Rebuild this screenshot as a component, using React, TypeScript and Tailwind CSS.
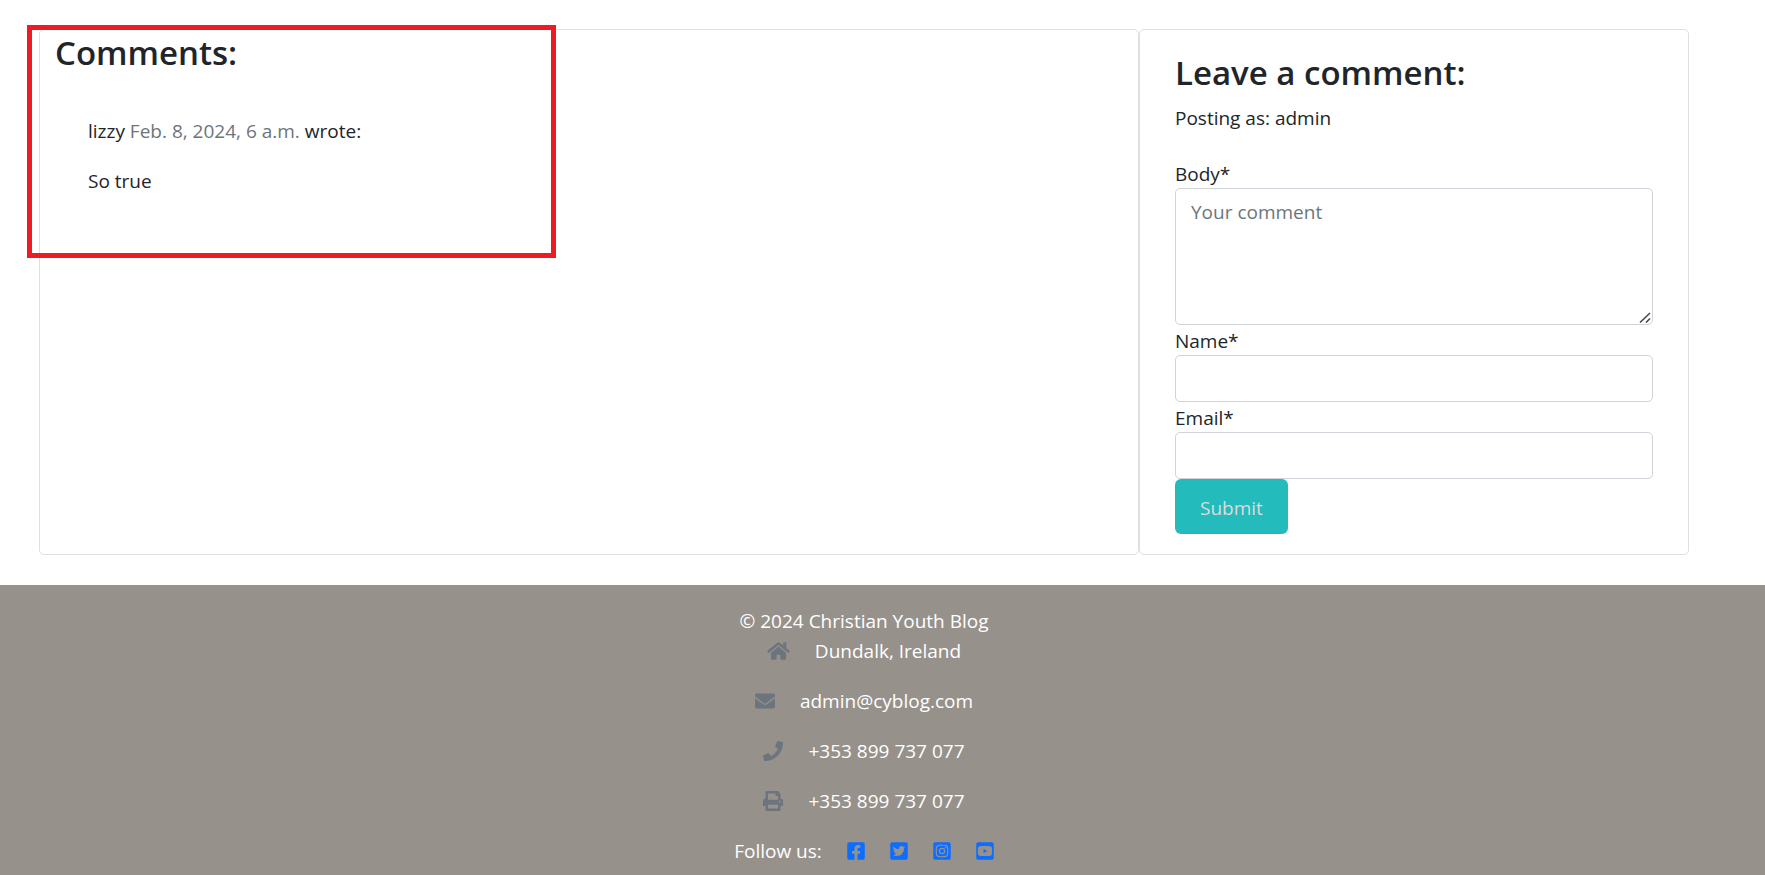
import React from "react";
import {
  FaEnvelope,
  FaFacebookSquare,
  FaHome,
  FaInstagramSquare,
  FaPhone,
  FaPrint,
  FaTwitterSquare,
  FaYoutubeSquare,
} from "react-icons/fa";

const contacts = [
  { icon: FaHome, text: "Dundalk, Ireland", size: "h-5 w-[23px]" },
  { icon: FaEnvelope, text: "admin@cyblog.com", size: "size-5" },
  { icon: FaPhone, text: "+353 899 737 077", size: "size-5" },
  { icon: FaPrint, text: "+353 899 737 077", size: "size-5" },
];

const socials = [
  { icon: FaFacebookSquare, name: "Facebook", href: "https://www.facebook.com" },
  { icon: FaTwitterSquare, name: "Twitter", href: "https://twitter.com" },
  { icon: FaInstagramSquare, name: "Instagram", href: "https://www.instagram.com" },
  { icon: FaYoutubeSquare, name: "YouTube", href: "https://www.youtube.com" },
];

const headingClass = "text-[33px] leading-[46px] font-semibold";
const labelClass = "block h-[30px] leading-8";
const fieldClass =
  "block w-full rounded-[5px] border border-[#ced4da] bg-white px-[15px] py-2 placeholder:text-[#6c757d]";

function Comments() {
  return (
    <section className="relative w-2/3 rounded-[5px] border border-[#dfdfdf] px-[15px]">
      <h3 className={headingClass}>Comments:</h3>
      <article className="px-[33px] pt-10">
        <p className="mb-5">
          lizzy <span className="text-[#6c757d]">Feb. 8, 2024, 6 a.m.</span> wrote:
        </p>
        <p>So true</p>
      </article>
      <div className="pointer-events-none absolute -top-[5px] -left-[13px] h-[233px] w-[529px] border-5 border-[#ed1c24]" />
    </section>
  );
}

function CommentForm() {
  return (
    <section className="w-1/3 rounded-[5px] border border-[#dfdfdf] px-[35px] py-5">
      <h3 className={`${headingClass} mb-[7px]`}>Leave a comment:</h3>
      <p className="mb-[25px]">Posting as: admin</p>
      <form onSubmit={(event) => event.preventDefault()}>
        <label htmlFor="body" className={labelClass}>Body*</label>
        <div className="relative">
          <textarea id="body" placeholder="Your comment" className={`${fieldClass} h-[137px] resize-y`} />
          <svg
            viewBox="0 0 13 13"
            className="pointer-events-none absolute right-0.5 bottom-0.5 size-[13px] bg-white"
            fill="none"
            stroke="#4a4a4a"
            strokeWidth="1.6"
            aria-hidden="true"
          >
            <path d="M2 12.5 12 3M8 12.5l4-4" />
          </svg>
        </div>
        <label htmlFor="name" className={labelClass}>Name*</label>
        <input id="name" type="text" className={`${fieldClass} h-[47px]`} />
        <label htmlFor="email" className={labelClass}>Email*</label>
        <input id="email" type="email" className={`${fieldClass} h-[47px]`} />
        <button type="submit" className="block h-[55px] rounded-md bg-[#23bbbb] px-[25px] pt-0.5 text-[#dcdcdc]">
          Submit
        </button>
      </form>
    </section>
  );
}

export default function App() {
  return (
    <div className="flex min-h-screen flex-col bg-white font-['Open_Sans',sans-serif] text-[19px] leading-[30px] text-[#212529]">
      <main className="pt-[29px] pr-[37px] pb-[30px]">
        <div className="mx-auto flex max-w-[1650px]">
          <Comments />
          <CommentForm />
        </div>
      </main>
      <footer className="grow bg-[#97918c] pt-[21px] pr-[37px] text-center text-white">
        <p>© 2024 Christian Youth Blog</p>
        <ul className="mb-5 flex flex-col gap-5">
          {contacts.map(({ icon: Icon, text, size }, index) => (
            <li key={index} className="flex items-center justify-center gap-[25px]">
              <Icon className={`${size} text-[#6c757d]`} aria-hidden="true" />
              <span>{text}</span>
            </li>
          ))}
        </ul>
        <div className="flex items-center justify-center gap-[25px]">
          <span>Follow us:</span>
          {socials.map(({ icon: Icon, name, href }) => (
            <a key={name} href={href} aria-label={name} className="text-[#0d6efd]">
              <Icon className="h-5 w-[18px]" />
            </a>
          ))}
        </div>
      </footer>
    </div>
  );
}
